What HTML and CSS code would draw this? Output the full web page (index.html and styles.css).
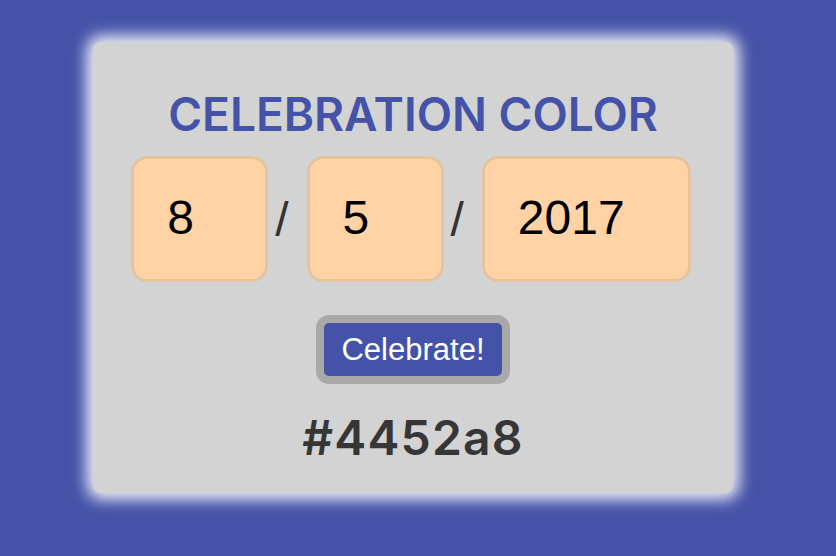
FILE: index.html
```html
<!DOCTYPE html>
<html>
<head>
<meta charset="utf-8">
<link rel="stylesheet" href="styles.css">
</head>
<body>
<div class="card">
  <h1 class="title">CELEBRATION COLOR</h1>
  <div class="date-row">
    <input class="date-box short" type="text" value="8">
    <span class="slash">/</span>
    <input class="date-box short" type="text" value="5">
    <span class="slash">/</span>
    <input class="date-box long" type="text" value="2017">
  </div>
  <button class="celebrate">Celebrate!</button>
  <div class="hex">#4452a8</div>
</div>
</body>
</html>
```
FILE: styles.css
```css
html, body {
  margin: 0;
}
body {
  background: #4452a8;
  height: 556px;
  box-sizing: border-box;
  padding: 42px 10px 0 0;
  display: flex;
  justify-content: center;
  align-items: flex-start;
  overflow: hidden;
}
.card {
  width: 640px;
  height: 451px;
  background: #d3d3d3;
  border-radius: 8px;
  box-shadow: 0 0 16px 6px rgba(255, 255, 255, 0.95);
  display: flex;
  flex-direction: column;
  align-items: center;
  box-sizing: border-box;
  padding-top: 44px;
}
.title {
  margin: 0;
  font-family: Inter, "Open Sans", sans-serif;
  font-weight: 600;
  font-size: 46px;
  line-height: 56px;
  letter-spacing: 0;
  color: #4452a8;
}
.date-row {
  display: flex;
  align-items: center;
  margin-top: 14px;
  padding-right: 4px;
}
.date-box {
  box-sizing: border-box;
  height: 126px;
  border: 3px solid #e5c39f;
  border-radius: 16px;
  background: #ffd3a5;
  font-family: "Liberation Sans", Arial, sans-serif;
  font-size: 48px;
  color: #000;
  padding: 0 0 4px 33px;
  outline: none;
  margin: 0;
}
.short {
  width: 137px;
}
.long {
  width: 209px;
}
.slash {
  font-family: "Liberation Sans", Arial, sans-serif;
  font-size: 48px;
  color: #333;
  margin: 0 18px 0 7px;
}
.celebrate {
  margin-top: 33px;
  font-family: "Liberation Sans", Arial, sans-serif;
  font-size: 31px;
  line-height: 37px;
  color: #fff;
  background: #4452a8;
  border: 8px solid #a9a9a9;
  border-radius: 13px;
  padding: 8px 17px;
}
.hex {
  margin-top: 26px;
  font-family: Inter, "Open Sans", sans-serif;
  font-weight: 600;
  font-size: 48px;
  line-height: 56px;
  letter-spacing: 1.2px;
  color: #363636;
}
```
